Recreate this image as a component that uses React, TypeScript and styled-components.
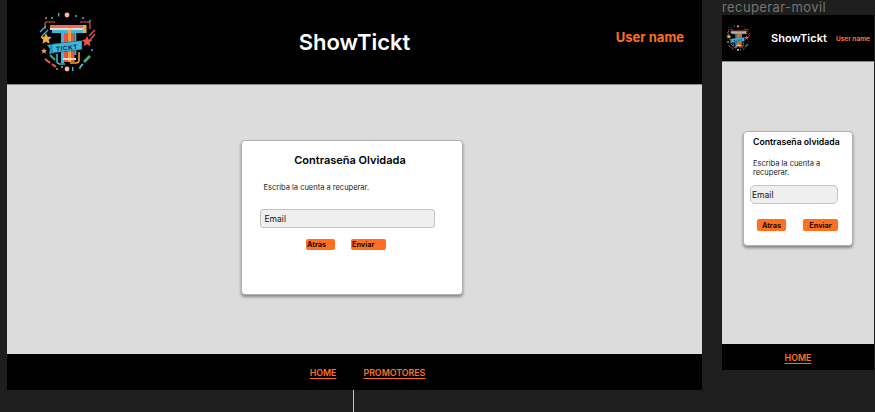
import React from 'react'
import styled, { createGlobalStyle } from 'styled-components'

const orange = '#ff7020'

const GlobalStyle = createGlobalStyle`
  html, body {
    margin: 0;
    padding: 0;
    width: 875px;
    height: 412px;
    overflow: hidden;
    background: #1e1e1e;
    font-family: Inter, "Liberation Sans", sans-serif;
  }
`

const Canvas = styled.div`
  display: flex;
  align-items: flex-start;
  gap: 20px;
  width: 875px;
  height: 412px;
  padding-left: 7px;
  box-sizing: border-box;
  overflow: hidden;
`

const DesktopColumn = styled.div`
  display: flex;
  flex-direction: column;
  width: 695px;
`

const Connector = styled.div`
  width: 1px;
  height: 22px;
  margin-left: 346px;
  background: #c4c4c4;
`

const MobileColumn = styled.div`
  display: flex;
  flex-direction: column;
  width: 152px;
`

const FrameLabel = styled.div`
  height: 15px;
  font-size: 13px;
  line-height: 14px;
  letter-spacing: 0.4px;
  color: #757575;
`

const Frame = styled.div<{ $height: number }>`
  display: flex;
  flex-direction: column;
  height: ${p => p.$height}px;
  background: #000;
`

const Header = styled.header<{ $mobile?: boolean }>`
  display: grid;
  grid-template-columns: ${p => (p.$mobile ? '49px 59px 1fr' : '1fr auto 1fr')};
  align-items: center;
  height: ${p => (p.$mobile ? 46 : 84)}px;
  flex: none;
  background: #000;
  border-bottom: 1px solid #8a8a8a;
`

const LogoSlot = styled.div<{ $mobile?: boolean }>`
  display: flex;
  align-items: center;
  padding-left: ${p => (p.$mobile ? 3 : 30)}px;
`

const Title = styled.h1<{ $mobile?: boolean }>`
  margin: 0;
  font-size: ${p => (p.$mobile ? 11 : 22)}px;
  font-weight: 600;
  white-space: nowrap;
  color: #fff;
`

const UserName = styled.span<{ $mobile?: boolean }>`
  justify-self: end;
  align-self: ${p => (p.$mobile ? 'center' : 'start')};
  margin: ${p => (p.$mobile ? '2px 4px 0 0' : '29px 18px 0 0')};
  font-size: ${p => (p.$mobile ? 6.5 : 13)}px;
  font-weight: 700;
  white-space: nowrap;
  color: ${orange};
`

const Main = styled.main<{ $mobile?: boolean }>`
  flex: 1;
  display: flex;
  justify-content: ${p => (p.$mobile ? 'flex-start' : 'center')};
  align-items: flex-start;
  padding: ${p => (p.$mobile ? '69px 0 0 21px' : '55px 6px 0 0')};
  background: #dcdcdc;
  box-sizing: border-box;
`

const Card = styled.section<{ $mobile?: boolean }>`
  display: flex;
  flex-direction: column;
  flex: none;
  box-sizing: border-box;
  width: ${p => (p.$mobile ? 110 : 222)}px;
  height: ${p => (p.$mobile ? 115 : 155)}px;
  padding: ${p => (p.$mobile ? '0 14px 0 6px' : '0 27px 0 18px')};
  background: #fff;
  border: 1px solid #b0b0b0;
  border-radius: 4px;
  box-shadow: 0 2px 3px rgba(0, 0, 0, 0.4);
`

const CardTitle = styled.h2<{ $mobile?: boolean }>`
  margin: ${p => (p.$mobile ? '3px 0 0 3px' : '12px 0 0 6px')};
  font-size: ${p => (p.$mobile ? 8.7 : 11)}px;
  line-height: 14px;
  font-weight: 600;
  text-align: center;
  white-space: nowrap;
  color: #000;
`

const Hint = styled.p<{ $mobile?: boolean }>`
  margin: ${p => (p.$mobile ? '10px 0 0 3px' : '16px 0 0 4px')};
  font-size: 7.5px;
  line-height: 9px;
  color: #222;
`

const EmailField = styled.div<{ $mobile?: boolean }>`
  display: flex;
  align-items: center;
  box-sizing: border-box;
  height: 19px;
  margin-top: ${p => (p.$mobile ? 8 : 17)}px;
  padding-left: ${p => (p.$mobile ? 1 : 4)}px;
  font-size: 8.5px;
  color: #111;
  background: #efefef;
  border: 1px solid #c2c2c2;
  border-radius: ${p => (p.$mobile ? 5 : 3)}px;
`

const Actions = styled.div<{ $mobile?: boolean }>`
  display: flex;
  justify-content: ${p => (p.$mobile ? 'space-between' : 'center')};
  gap: 16px;
  margin-top: ${p => (p.$mobile ? 15 : 11)}px;
  padding: ${p => (p.$mobile ? '0 0 0 7px' : '0 2px 0 0')};
`

const ActionButton = styled.button<{ $width: number; $mobile?: boolean }>`
  width: ${p => p.$width}px;
  height: ${p => (p.$mobile ? 12 : 11)}px;
  padding: 0 ${p => (p.$mobile ? 0 : 1)}px;
  font: 700 7.3px Inter, "Liberation Sans", sans-serif;
  text-align: ${p => (p.$mobile ? 'center' : 'left')};
  color: #1a0a00;
  background: ${orange};
  border: none;
  border-radius: 2px;
`

const Footer = styled.footer<{ $mobile?: boolean }>`
  display: flex;
  justify-content: center;
  gap: 27px;
  align-items: center;
  flex: none;
  height: ${p => (p.$mobile ? 26 : 36)}px;
  padding-left: ${p => (p.$mobile ? 0 : 26)}px;
  background: #000;
  box-sizing: border-box;
`

const FooterLink = styled.a`
  font-size: 8.8px;
  font-weight: 600;
  line-height: 11px;
  color: ${orange};
  text-decoration: underline;
  text-underline-offset: 2px;
`

const LogoText = styled.text`
  font: 800 6.5px "Liberation Sans", sans-serif;
  letter-spacing: 0.5px;
  fill: #10243a;
`

function Logo({ size }: { size: number }) {
  return (
    <svg width={size} height={size} viewBox="0 0 60 60">
      {/* ring of dots */}
      <circle cx="30" cy="3" r="2.4" fill="#f7b8a8" />
      <circle cx="30" cy="57" r="2.4" fill="#f7b8a8" />
      <g fill="#3bb7d8">
        <rect x="21" y="1" width="1.4" height="3.5" />
        <circle cx="39" cy="4" r="1" />
        <circle cx="46" cy="6" r="1" />
        <circle cx="15" cy="6" r="1" />
        <circle cx="53" cy="9" r="1" />
        <rect x="35" y="55" width="1.4" height="4" />
        <circle cx="55" cy="38" r="1" />
      </g>
      <g fill="#e8a33d">
        <circle cx="25" cy="55" r="0.9" />
        <circle cx="20" cy="57" r="0.9" />
        <circle cx="43" cy="56" r="0.9" />
        <circle cx="5" cy="25" r="0.9" />
        <circle cx="9" cy="6" r="0.9" />
      </g>
      {/* corner frame */}
      <path d="M8 17v-5q0-2 2-2h8" fill="none" stroke="#e0604c" strokeWidth="1.2" />
      <path d="M43 10h8q2 0 2 2v5" fill="none" stroke="#e0604c" strokeWidth="1.2" />
      {/* side hatches */}
      <path d="M3 20l6-6M5 24l6-6" stroke="#3bb7d8" strokeWidth="1.3" />
      <path d="M52 24l6-6M53 28l5-6" stroke="#e0604c" strokeWidth="1.3" />
      <path d="M8 47l5 4" stroke="#e0604c" strokeWidth="2.2" />
      <path d="M13 43l5 5" stroke="#4fa88a" strokeWidth="2" />
      <path d="M15 52l4 3" stroke="#e0604c" strokeWidth="2" />
      <path d="M53 44l-6 6" stroke="#4fa88a" strokeWidth="2.6" />
      <path d="M46 52l-3 3" stroke="#3bb7d8" strokeWidth="2" />
      {/* bottom arcs */}
      <path d="M20 42v7q0 3 3 3h5" fill="none" stroke="#3bb7d8" strokeWidth="1.6" />
      <path d="M42 40v8q0 3-3 3h-6" fill="none" stroke="#f0a040" strokeWidth="1.6" />
      {/* big T */}
      <rect x="13" y="13" width="33" height="3" fill="#ef6a5a" />
      <rect x="13" y="16" width="33" height="2" fill="#f4d7c0" />
      <rect x="15" y="18" width="31" height="3" fill="#39b8e0" />
      <rect x="46" y="13" width="3.5" height="8" fill="#e8b040" />
      <rect x="24" y="21" width="3" height="30" fill="#39b8e0" />
      <rect x="27" y="21" width="3.5" height="29" fill="#e8534a" />
      <rect x="30.5" y="18" width="3.5" height="32" fill="#f0a040" />
      <rect x="34" y="21" width="3.5" height="29" fill="#e8534a" />
      <rect x="37.5" y="21" width="1.8" height="22" fill="#39b8e0" />
      <rect x="26" y="46" width="13" height="2" fill="#f4d7c0" />
      {/* stars */}
      <path d="M9 21l1.7 3.7 4 .4-3 2.7.9 4-3.6-2.1-3.6 2.1.9-4-3-2.7 4-.4z" fill="#f0b040" />
      <path d="M50 24l1.6 3.5 3.8.4-2.9 2.5.9 3.8-3.4-2-3.4 2 .9-3.8-2.9-2.5 3.8-.4z" fill="#e8534a" />
      <path d="M7 36l.9 2 2.1.2-1.6 1.4.5 2.1-1.9-1.1-1.9 1.1.5-2.1L4 38.2l2.1-.2z" fill="#f0a040" />
      {/* ribbon */}
      <path d="M10 33l7-1v9l-5 1 1-5z" fill="#2f9fd0" />
      <path d="M15 32l30-3.5v9l-30 3.5z" fill="#39b8e0" stroke="#10243a" strokeWidth="0.4" />
      <LogoText x="19" y="38" transform="rotate(-6 30 35)">TICKT</LogoText>
    </svg>
  )
}

function ForgotCard({ mobile, title }: { mobile?: boolean; title: string }) {
  return (
    <Card $mobile={mobile}>
      <CardTitle $mobile={mobile}>{title}</CardTitle>
      <Hint $mobile={mobile}>Escriba la cuenta a recuperar.</Hint>
      <EmailField $mobile={mobile}>Email</EmailField>
      <Actions $mobile={mobile}>
        <ActionButton $mobile={mobile} $width={29}>Atras</ActionButton>
        <ActionButton $mobile={mobile} $width={35}>Enviar</ActionButton>
      </Actions>
    </Card>
  )
}

export default function App() {
  return (
    <>
      <GlobalStyle />
      <Canvas>
        <DesktopColumn>
          <Frame $height={390}>
            <Header>
              <LogoSlot><Logo size={60} /></LogoSlot>
              <Title>ShowTickt</Title>
              <UserName>User name</UserName>
            </Header>
            <Main>
              <ForgotCard title="Contraseña Olvidada" />
            </Main>
            <Footer>
              <FooterLink>HOME</FooterLink>
              <FooterLink>PROMOTORES</FooterLink>
            </Footer>
          </Frame>
          <Connector />
        </DesktopColumn>
        <MobileColumn>
          <FrameLabel>recuperar-movil</FrameLabel>
          <Frame $height={355}>
            <Header $mobile>
              <LogoSlot $mobile><Logo size={26} /></LogoSlot>
              <Title $mobile>ShowTickt</Title>
              <UserName $mobile>User name</UserName>
            </Header>
            <Main $mobile>
              <ForgotCard mobile title="Contraseña olvidada" />
            </Main>
            <Footer $mobile>
              <FooterLink>HOME</FooterLink>
            </Footer>
          </Frame>
        </MobileColumn>
      </Canvas>
    </>
  )
}
